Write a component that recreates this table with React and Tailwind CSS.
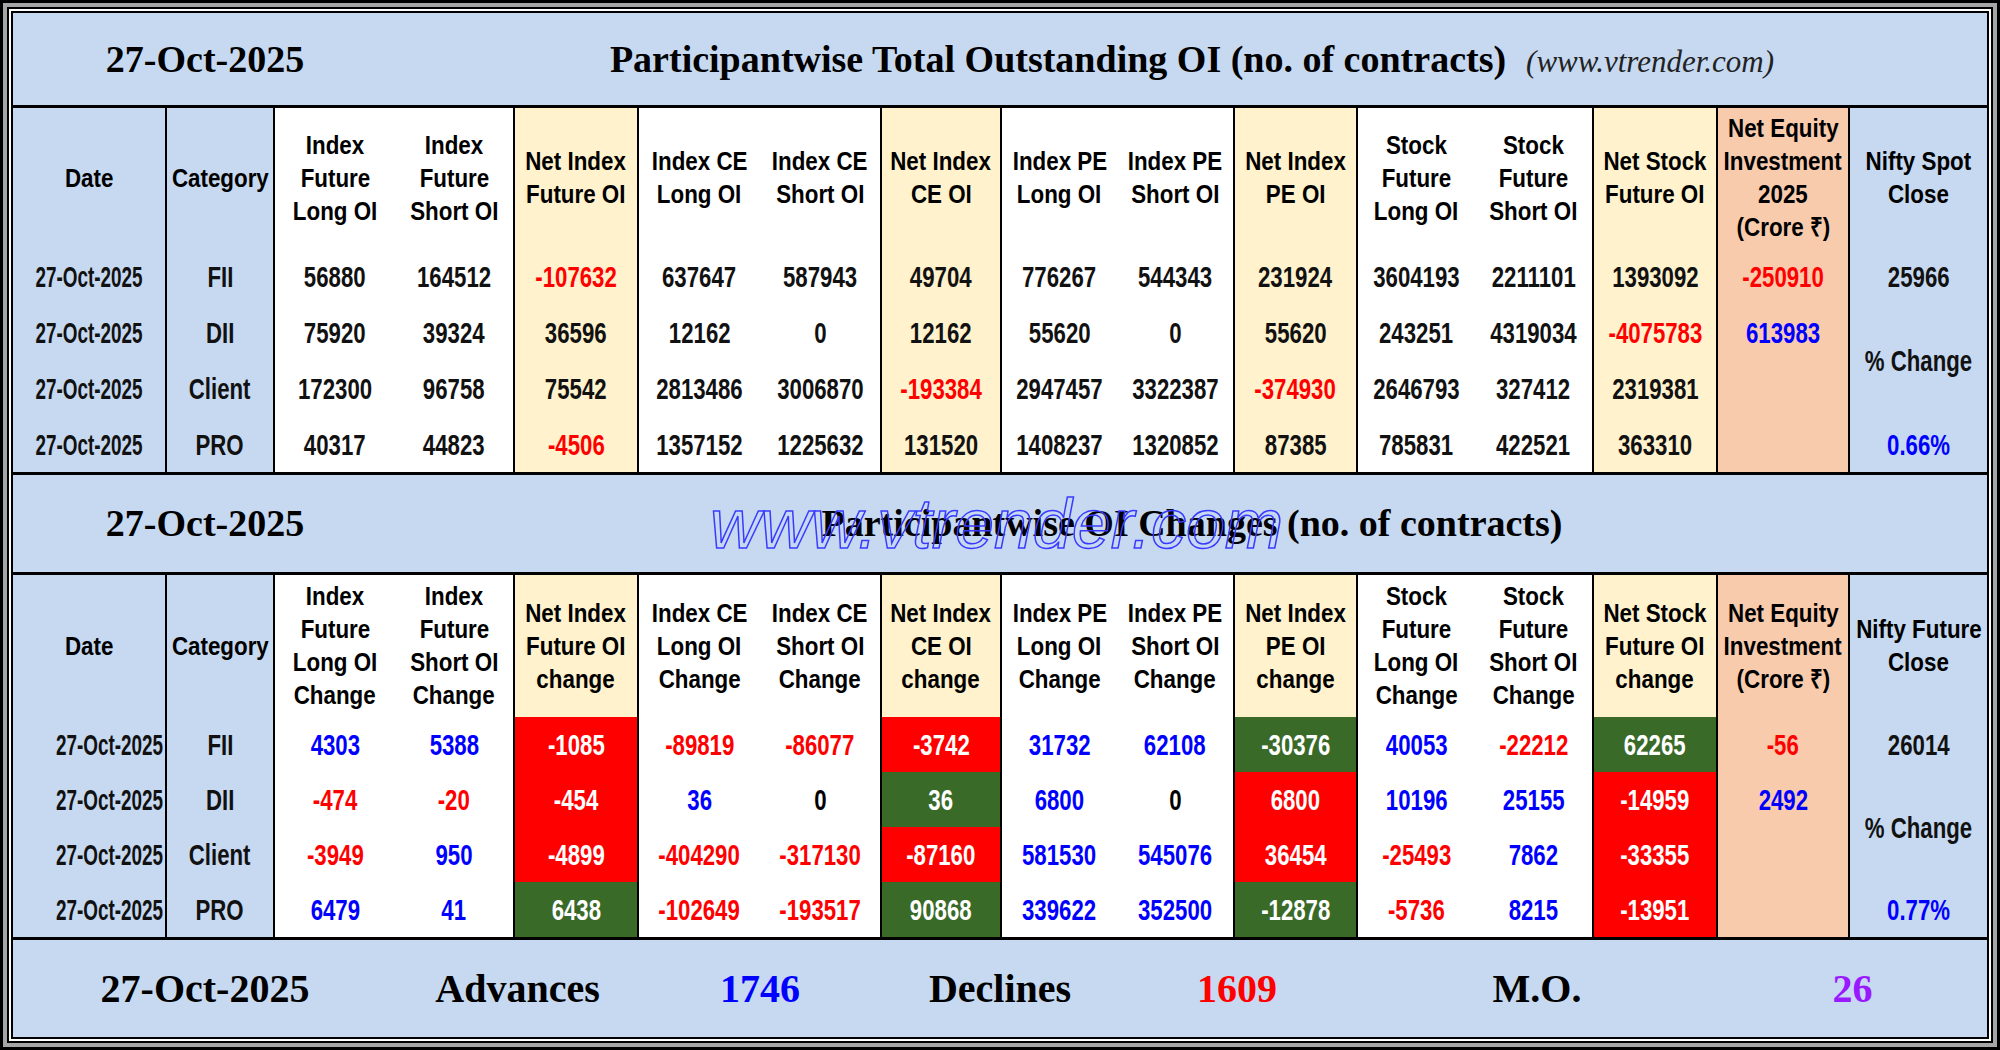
import clsx from "clsx";

const sans = "font-['Liberation_Sans','Arial',sans-serif]";
const serif = "font-['Liberation_Serif','Times_New_Roman',serif]";
const grid =
  "grid grid-cols-[154px_108px_120px_120px_124px_121px_122px_120px_115px_118px_123px_117px_119px_124px_132px_137px]";

// column look: background + right border
const colBg = [
  "bg-[#c6d9f1]", "bg-[#c6d9f1]", "bg-white", "bg-white", "bg-[#fff2cc]", "bg-white", "bg-white", "bg-[#fff2cc]",
  "bg-white", "bg-white", "bg-[#fff2cc]", "bg-white", "bg-white", "bg-[#fff2cc]", "bg-[#f8cbad]", "bg-[#c6d9f1]",
];
const borderCols = [0, 1, 3, 4, 6, 7, 9, 10, 12, 13, 14];
const netCols = [4, 7, 10, 13];

const head1 = [
  ["Date"], ["Category"], ["Index", "Future", "Long OI"], ["Index", "Future", "Short OI"], ["Net Index", "Future OI"],
  ["Index CE", "Long OI"], ["Index CE", "Short OI"], ["Net Index", "CE OI"], ["Index PE", "Long OI"], ["Index PE", "Short OI"],
  ["Net Index", "PE OI"], ["Stock", "Future", "Long OI"], ["Stock", "Future", "Short OI"], ["Net Stock", "Future OI"],
  ["Net Equity", "Investment", "2025", "(Crore ₹)"], ["Nifty Spot", "Close"],
];

const head2 = [
  ["Date"], ["Category"], ["Index", "Future", "Long OI", "Change"], ["Index", "Future", "Short OI", "Change"],
  ["Net Index", "Future OI", "change"], ["Index CE", "Long OI", "Change"], ["Index CE", "Short OI", "Change"],
  ["Net Index", "CE OI", "change"], ["Index PE", "Long OI", "Change"], ["Index PE", "Short OI", "Change"],
  ["Net Index", "PE OI", "change"], ["Stock", "Future", "Long OI", "Change"], ["Stock", "Future", "Short OI", "Change"],
  ["Net Stock", "Future OI", "change"], ["Net Equity", "Investment", "(Crore ₹)"], ["Nifty Future", "Close"],
];

const rows1 = [
  ["27-Oct-2025", "FII", "56880", "164512", "-107632", "637647", "587943", "49704", "776267", "544343", "231924", "3604193", "2211101", "1393092", "-250910"],
  ["27-Oct-2025", "DII", "75920", "39324", "36596", "12162", "0", "12162", "55620", "0", "55620", "243251", "4319034", "-4075783", "613983"],
  ["27-Oct-2025", "Client", "172300", "96758", "75542", "2813486", "3006870", "-193384", "2947457", "3322387", "-374930", "2646793", "327412", "2319381", ""],
  ["27-Oct-2025", "PRO", "40317", "44823", "-4506", "1357152", "1225632", "131520", "1408237", "1320852", "87385", "785831", "422521", "363310", ""],
];

const rows2 = [
  ["27-Oct-2025", "FII", "4303", "5388", "-1085", "-89819", "-86077", "-3742", "31732", "62108", "-30376", "40053", "-22212", "62265", "-56"],
  ["27-Oct-2025", "DII", "-474", "-20", "-454", "36", "0", "36", "6800", "0", "6800", "10196", "25155", "-14959", "2492"],
  ["27-Oct-2025", "Client", "-3949", "950", "-4899", "-404290", "-317130", "-87160", "581530", "545076", "36454", "-25493", "7862", "-33355", ""],
  ["27-Oct-2025", "PRO", "6479", "41", "6438", "-102649", "-193517", "90868", "339622", "352500", "-12878", "-5736", "8215", "-13951", ""],
];

const signColor = (v) => (v.startsWith("-") ? "text-[#ff0000]" : Number(v) === 0 ? "text-black" : "text-[#0000ff]");

// narrow look: Arial bold squeezed sideways, like Arial Narrow
const Narrow = ({ children, head }) => (
  <span className={clsx("inline-block whitespace-nowrap", head ? "scale-x-[0.86]" : "scale-x-[0.74]")}>{children}</span>
);

function Cell({ col, className, children }) {
  return (
    <div
      className={clsx(
        "flex items-center justify-center text-center",
        borderCols.includes(col) && "border-r-2 border-black",
        className
      )}
    >
      {children}
    </div>
  );
}

function HeadRow({ labels }) {
  return labels.map((lines, i) => (
    <Cell key={i} col={i} className={clsx(colBg[i], "flex-col text-[26px] leading-[33px] font-bold text-black")}>
      {lines.map((l) => (
        <Narrow key={l} head>
          {l}
        </Narrow>
      ))}
    </Cell>
  ));
}

function DataCell({ v, i, table }) {
  if (i === 0) {
    return (
      <Cell col={0} className={clsx(colBg[0], table === 2 && "justify-end pr-[2px]")}>
        <span className={clsx("inline-block whitespace-nowrap scale-x-[0.63]", table === 2 ? "origin-right" : "origin-center")}>{v}</span>
      </Cell>
    );
  }
  if (i === 1)
    return (
      <Cell col={1} className={colBg[1]}>
        <Narrow>{v}</Narrow>
      </Cell>
    );

  let bg = colBg[i];
  let color = "text-[#111111]";
  if (i === 14) color = v ? signColor(v) : "";
  else if (table === 1) {
    if (netCols.includes(i) && v.startsWith("-")) color = "text-[#ff0000]";
  } else if (netCols.includes(i)) {
    const n = Number(v);
    const good = i === 10 ? n < 0 : n > 0;
    bg = good ? "bg-[#3a6a28]" : "bg-[#ff0000]";
    color = "text-white";
  } else color = signColor(v);

  return (
    <Cell col={i} className={clsx(bg, color)}>
      <Narrow>{v}</Narrow>
    </Cell>
  );
}

function Table({ head, rows, table, nifty }) {
  const rowCls = table === 1 ? "grid-rows-[140px_repeat(4,56px)]" : "grid-rows-[142px_repeat(4,55px)]";
  return (
    <div className={clsx(grid, rowCls, sans, "border-y-[3px] border-black text-[30px] font-bold text-[#111111]")}>
      <HeadRow labels={head} />
      {rows.map((r, ri) => (
        <>
          {r.map((v, i) => (
            <DataCell key={`${ri}-${i}`} v={v} i={i} table={table} />
          ))}
          {ri === 0 && (
            <Cell col={15} className="bg-[#c6d9f1] text-[#111111]">
              <Narrow>{nifty[0]}</Narrow>
            </Cell>
          )}
          {ri === 1 && (
            <Cell col={15} className="row-span-2 bg-[#c6d9f1] text-[#111111]">
              <Narrow>% Change</Narrow>
            </Cell>
          )}
          {ri === 3 && (
            <Cell col={15} className="bg-[#c6d9f1] text-[#0000ff]">
              <Narrow>{nifty[1]}</Narrow>
            </Cell>
          )}
        </>
      ))}
    </div>
  );
}

export default function App() {
  return (
    <div className="w-[2000px] h-[1050px] border-[3px] border-black bg-[#a6a6a6] p-[4px]">
      <div className="h-full border-[6px] border-double border-black bg-white">
        <div className="flex h-full flex-col bg-[#c6d9f1]">
          {/* title 1 */}
          <div className={clsx("flex h-[92px] items-center font-bold text-black", serif)}>
            <div className="w-[384px] text-center text-[38px]">27-Oct-2025</div>
            <div className="flex flex-1 items-baseline justify-center gap-[20px]">
              <span className="text-[38px]">Participantwise Total Outstanding OI (no. of contracts)</span>
              <span className="text-[31px] font-normal italic text-[#222222]">(www.vtrender.com)</span>
            </div>
          </div>

          <Table head={head1} rows={rows1} table={1} nifty={["25966", "0.66%"]} />

          {/* title 2 */}
          <div className={clsx("relative flex h-[97px] items-center font-bold text-black", serif)}>
            <div className="w-[384px] text-center text-[38px]">27-Oct-2025</div>
            <div className="flex-1 text-center text-[38px]">Participantwise OI Changes (no. of contracts)</div>
            <span className="pointer-events-none absolute left-[697px] top-1/2 -translate-y-1/2 font-['Liberation_Sans',sans-serif] text-[70px] font-normal italic text-transparent [-webkit-text-stroke:1.5px_#3a3aff]">
              www.vtrender.com
            </span>
          </div>

          <Table head={head2} rows={rows2} table={2} nifty={["26014", "0.77%"]} />

          {/* footer */}
          <div
            className={clsx(
              "grid flex-1 grid-cols-[384px_241px_244px_236px_238px_362px_269px] items-center text-center text-[40px] font-bold text-black",
              serif
            )}
          >
            <div>27-Oct-2025</div>
            <div>Advances</div>
            <div className="text-[#0000ff]">1746</div>
            <div>Declines</div>
            <div className="text-[#ff0000]">1609</div>
            <div>M.O.</div>
            <div className="text-[#9a1aff]">26</div>
          </div>
        </div>
      </div>
    </div>
  );
}
